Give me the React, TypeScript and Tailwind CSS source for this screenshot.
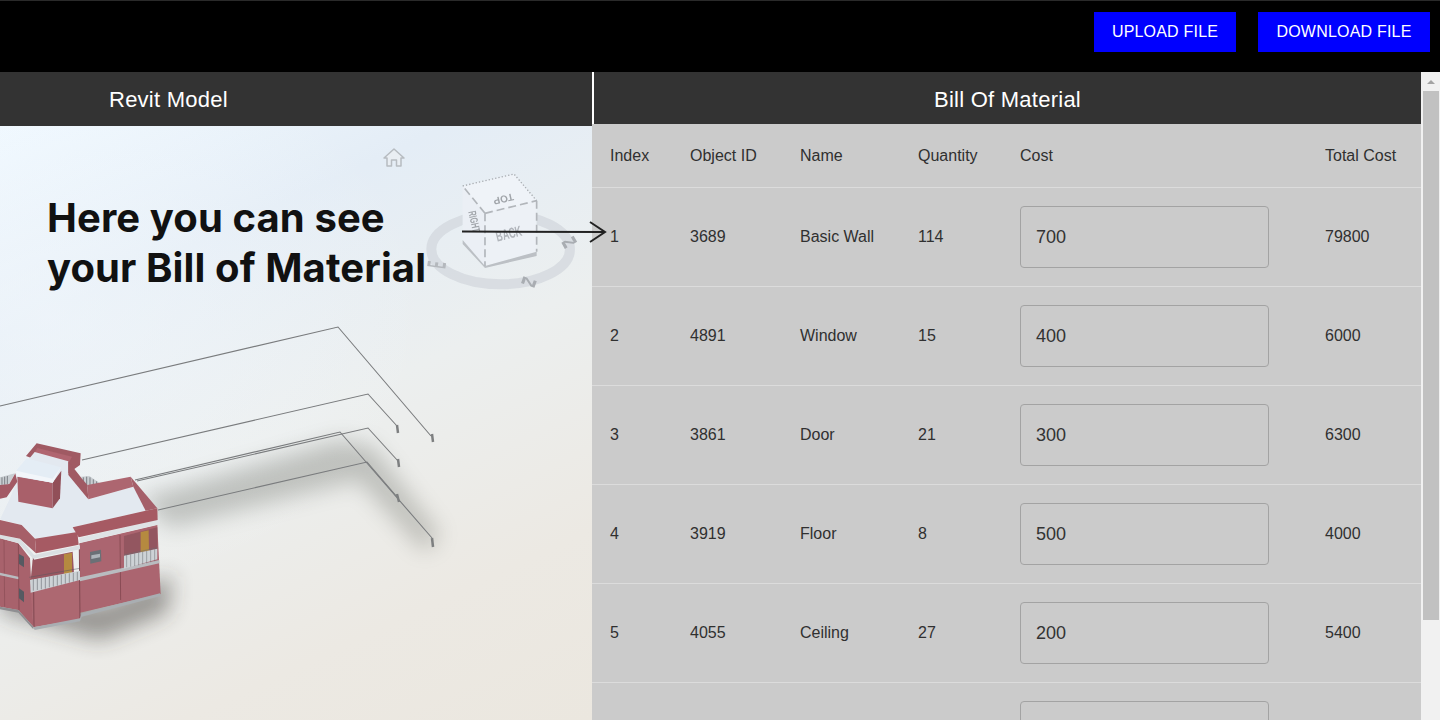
import React from 'react'

const rows = [
  { index: 1, id: 3689, name: 'Basic Wall', qty: 114, cost: 700, total: 79800 },
  { index: 2, id: 4891, name: 'Window', qty: 15, cost: 400, total: 6000 },
  { index: 3, id: 3861, name: 'Door', qty: 21, cost: 300, total: 6300 },
  { index: 4, id: 3919, name: 'Floor', qty: 8, cost: 500, total: 4000 },
  { index: 5, id: 4055, name: 'Ceiling', qty: 27, cost: 200, total: 5400 },
  { index: 6, id: 4120, name: '', qty: '', cost: 100, total: '' },
]

const gridCols = 'grid grid-cols-[80px_110px_118px_102px_305px_1fr] pl-[18px] items-center'

const House = () => (
  <g transform="translate(0 440) scale(0.3333)" filter="url(#soft)">
    {/* walls */}
    <polygon points="238,310 472,255 482,462 240,518" fill="#ab656f" />
    <polygon points="0,295 55,310 90,355 100,560 55,510 0,500" fill="#a8626c" />
    <polygon points="90,440 240,415 240,538 100,562" fill="#ad6771" />
    <line x1="360" y1="285" x2="362" y2="480" stroke="#8a4c55" strokeWidth="3" />
    <line x1="12" y1="300" x2="14" y2="500" stroke="#8a4c55" strokeWidth="2" />
    <line x1="55" y1="312" x2="57" y2="510" stroke="#8a4c55" strokeWidth="3" />
    <line x1="100" y1="350" x2="102" y2="560" stroke="#7f4750" strokeWidth="3" />
    <line x1="238" y1="320" x2="240" y2="535" stroke="#7f4750" strokeWidth="3" />

    {/* mid band */}
    <polygon points="240,412 478,360 478,370 240,424" fill="#b9bcc0" />
    <polygon points="0,398 55,410 55,418 0,406" fill="#b9bcc0" />
    {/* base */}
    <polygon points="100,562 240,535 245,520 480,460 482,468 245,530 240,544 104,570" fill="#a9aeb2" />
    <polygon points="0,500 55,510 100,560 100,568 55,518 0,508" fill="#8f8f92" />

    {/* right balcony */}
    <polygon points="372,288 472,262 472,330 372,347" fill="#935660" />
    <polygon points="422,276 446,271 447,332 422,337" fill="#b58a3f" />
    <polygon points="372,347 472,326 472,358 372,386" fill="#cdd2d6" />
    <path d="M372 345 L472 323 M380 345 V382 M392 343 V380 M404 340 V378 M416 338 V376 M428 335 V373 M440 333 V370 M452 330 V367 M464 328 V364" stroke="#6a6e74" strokeWidth="1.500" fill="none" />

    {/* left balcony */}
    <polygon points="98,360 218,335 222,400 92,420" fill="#9a5761" />
    <polygon points="192,343 216,338 216,402 192,407" fill="#b58a3f" />
    <polygon points="90,420 240,392 240,420 92,458" fill="#cdd2d6" />
    <path d="M88 412 L240 385 M100 418 V452 M112 416 V450 M124 414 V448 M136 412 V446 M148 410 V442 M160 408 V440 M172 406 V437 M184 404 V434 M196 402 V431 M208 400 V428 M220 398 V425 M232 396 V422" stroke="#55585d" strokeWidth="1.500" fill="none" />

    {/* windows */}
    <polygon points="270,336 303,329 304,364 271,371" fill="#6b6f76" />
    <polygon points="274,346 300,341 300,352 274,357" fill="#aeb4ba" />
    <polygon points="57,342 72,350 72,382 57,372" fill="#565a62" />
    <polygon points="57,445 72,455 72,487 57,475" fill="#565a62" />

    {/* slab bands */}
    <polygon points="0,284 62,298 102,345 240,316 240,328 100,356 55,309 0,295" fill="#dadfe2" />
    <polygon points="238,294 478,238 480,252 240,308" fill="#dfe3e6" />

    {/* railings on the roof */}
    <polygon points="0,112 45,100 28,132 0,138" fill="#c9ced2" />
    <polygon points="243,110 268,108 300,130 262,142" fill="#c9ced2" />
    <path d="M6 112 V134 M14 110 V134 M22 108 V132 M250 112 V132 M260 110 V138 M270 112 V138 M280 118 V138 M290 124 V134" stroke="#54585d" strokeWidth="2" fill="none" />

    {/* back parapet */}
    <polygon points="78,48 110,10 242,40 240,75 205,100 110,60" fill="#a05a64" />
    <polygon points="112,24 216,50 205,70 104,38" fill="#b0656f" />

    {/* roof */}
    <polygon points="0,238 30,175 50,125 60,90 104,36 205,64 205,105 265,178 400,140 437,212 218,262 232,276 108,298 65,255" fill="#e3e9f0" />

    {/* parapets around roof */}
    <polygon points="0,135 28,132 46,100 52,125 20,172 0,176" fill="#a35a65" />
    <polygon points="205,64 245,115 262,135 265,178 205,105" fill="#a05a64" />
    <polygon points="262,135 392,110 400,140 265,178" fill="#ad6670" />
    <polygon points="392,110 472,205 437,212 400,140" fill="#a55e69" />
    <polygon points="218,262 437,212 472,205 473,240 236,292" fill="#a65a63" />
    <polygon points="105,296 232,276 236,314 108,340" fill="#a65a63" />
    <polygon points="0,240 65,255 105,296 108,340 60,296 0,284" fill="#a65e68" />

    {/* penthouse */}
    <polygon points="52,110 158,128 158,205 55,185" fill="#a9606a" />
    <polygon points="158,128 184,92 180,175 158,205" fill="#914f58" />
    <polygon points="48,92 80,55 183,82 158,128 50,108" fill="#e4edf5" />
    <polygon points="48,92 158,116 183,82 158,128 50,108" fill="#f2f6fa" />
  </g>
)

const Viewer = () => (
  <svg viewBox="0 126 592 594" className="absolute inset-0 w-full h-full">
    <defs>
      <filter id="shadow" x="-30%" y="-30%" width="160%" height="160%">
        <feGaussianBlur stdDeviation="11" />
      </filter>
      <filter id="soft">
        <feGaussianBlur stdDeviation="1.500" />
      </filter>
      <filter id="faint">
        <feGaussianBlur stdDeviation="2" />
      </filter>
      <filter id="wire">
        <feGaussianBlur stdDeviation="0.300" />
      </filter>
    </defs>

    {/* ground shadows */}
    <polygon points="140,498 340,440 372,446 440,535 425,552 358,480 170,528" fill="#55584f" opacity="0.3" filter="url(#shadow)" />
    <polygon points="0,612 100,640 168,612 172,575 100,605 0,590" fill="#2e2c28" opacity="0.45" filter="url(#shadow)" />

    {/* wires */}
    <g fill="none" stroke="#7a7c7e" strokeWidth="1.100" filter="url(#wire)">
      <path d="M0 406 L338 327 L431 436" />
      <path d="M82 460 L368 394 L397 426" />
      <path d="M135 480 L340 432 L432 538" />
      <path d="M137 481 L368 428 L398 461" />
      <path d="M158 510 L367 462 L398 498" />
    </g>
    <g stroke="#7d7f80" strokeWidth="2.500">
      <line x1="432" y1="434" x2="433" y2="442" />
      <line x1="397" y1="425" x2="398" y2="433" />
      <line x1="398" y1="459" x2="399" y2="467" />
      <line x1="397" y1="494" x2="399" y2="502" />
      <line x1="432" y1="538" x2="433" y2="547" />
    </g>

    <House />

    {/* home icon */}
    <path d="M384 158 L394 149 L404 158 L401 158 L401 166 L396.500 166 L396.500 160 L391.500 160 L391.500 166 L387 166 L387 158 Z" fill="#e9eef3" stroke="#b7bcc1" strokeWidth="1.500" strokeLinejoin="round" />

    {/* compass and view cube */}
    <g transform="translate(360 130) scale(0.3333)" filter="url(#faint)">
      <ellipse cx="422" cy="358" rx="208" ry="105" fill="none" stroke="#cfd4da" strokeWidth="30" opacity="0.65" />
      <text x="0" y="0" transform="translate(256 418) rotate(-82) scale(0.7 1.900)" fontFamily="Liberation Sans, sans-serif" fontWeight="700" fontSize="42" fill="#b4b8bd">E</text>
      <text x="0" y="0" transform="translate(535 455) rotate(200) scale(1.900 0.800)" fontFamily="Liberation Sans, sans-serif" fontWeight="700" fontSize="38" fill="#a9adb2">N</text>
      <text x="0" y="0" transform="translate(645 315) rotate(150) scale(1.900 0.800)" fontFamily="Liberation Sans, sans-serif" fontWeight="700" fontSize="38" fill="#a9adb2">N</text>

      <polygon points="308,168 462,132 530,212 375,250" fill="#eff3f8" />
      <polygon points="308,168 375,250 375,408 308,330" fill="#ebeff5" />
      <polygon points="375,250 530,212 530,365 375,408" fill="#edf1f6" />
      <polygon points="308,330 375,408 530,365 530,378 375,414 308,342" fill="#bcc0c5" />
      <g fill="none" stroke="#b2b6bb" strokeWidth="5" strokeDasharray="24 12">
        <path d="M375 250 L530 212" />
        <path d="M375 250 L308 168" />
        <path d="M375 250 L375 408" />
        <path d="M530 212 L530 365" />
      </g>
      <path d="M308 168 L462 132 L530 212" fill="none" stroke="#a9adb2" strokeWidth="4" strokeDasharray="4 6" />
      <text x="0" y="0" transform="translate(458 190) rotate(167)" fontFamily="Liberation Sans, sans-serif" fontWeight="700" fontSize="30" fill="#a0a4a9">TOP</text>
      <text x="0" y="0" transform="translate(412 335) rotate(-14) scale(0.8 1.300)" fontFamily="Liberation Sans, sans-serif" fontWeight="700" fontSize="34" fill="#b0b4ba">BACK</text>
      <text x="0" y="0" transform="translate(325 245) rotate(78) scale(0.7 1.100)" fontFamily="Liberation Sans, sans-serif" fontWeight="700" fontSize="30" fill="#a0a4a9">RIGHT</text>
    </g>
  </svg>
)

const App = () => {
  return (
    <div className="relative w-full h-screen overflow-hidden flex flex-col bg-black font-['Liberation_Sans',Arial,sans-serif]">
      {/* Top bar */}
      <header className="h-[72px] shrink-0 bg-black border-t border-[#2a2a2a] flex justify-end items-start pt-[11px] pr-[10px] gap-[22px]">
        <button className="w-[142px] h-[40px] bg-[#0000ff] text-white text-base tracking-[0.2px]">UPLOAD FILE</button>
        <button className="w-[172px] h-[40px] bg-[#0000ff] text-white text-base tracking-[0.2px]">DOWNLOAD FILE</button>
      </header>

      <div className="flex flex-1 min-h-0">
        {/* Left Side: model viewer */}
        <section className="w-[592px] shrink-0 flex flex-col">
          <div className="h-[54px] bg-[#333333] text-white text-[22px] tracking-[0.25px] flex items-center pl-[109px]">
            Revit Model
          </div>
          <div className="relative flex-1 bg-[radial-gradient(ellipse_at_8%_32%,rgba(246,250,253,0.5),transparent_50%),linear-gradient(155deg,#eff8ff_0%,#e4edf6_24%,#ecefef_50%,#ece9e3_78%,#ebe7df_100%)]">
            <Viewer />
          </div>
        </section>

        {/* Right Side: bill of material */}
        <section className="flex-1 min-w-0 flex flex-col bg-[#cbcbcb] overflow-hidden">
          <div className="h-[52px] shrink-0 bg-[#333333] border-l-2 border-white text-white text-[22px] tracking-[0.25px] pt-[2px] flex items-center justify-center">
            Bill Of Material
          </div>
          <div className={`${gridCols} h-[64px] shrink-0 border-b border-[#dcdcdc] text-base text-[#303030]`}>
            <div>Index</div>
            <div>Object ID</div>
            <div>Name</div>
            <div>Quantity</div>
            <div>Cost</div>
            <div>Total Cost</div>
          </div>
          {rows.map((r) => (
            <div key={r.index} className={`${gridCols} h-[99px] shrink-0 border-b border-[#dcdcdc] text-base text-[#303030]`}>
              <div>{r.index < 6 ? r.index : ''}</div>
              <div>{r.index < 6 ? r.id : ''}</div>
              <div>{r.name}</div>
              <div>{r.qty}</div>
              <div>
                <div className="w-[249px] h-[62px] rounded border border-[#a3a3a3] pl-[15px] flex items-center text-lg text-[#333333]">
                  {r.index < 6 ? r.cost : ''}
                </div>
              </div>
              <div>{r.total}</div>
            </div>
          ))}
        </section>

        {/* Scrollbar */}
        <div className="w-[19px] shrink-0 bg-[#f1f1f1] flex flex-col items-center">
          <div className="h-[19px] flex items-center justify-center">
            <div className="w-0 h-0 border-l-[4px] border-r-[4px] border-b-[4px] border-l-transparent border-r-transparent border-b-[#a3a3a3]" />
          </div>
          <div className="w-[16px] ml-[1px] h-[529px] bg-[#c1c1c1]" />
        </div>
      </div>

      {/* Tutorial overlay */}
      <h1 className="absolute left-[47px] top-[193px] text-[40px] leading-[50px] font-bold tracking-[0.1px] text-[#111111] font-['Inter',sans-serif] whitespace-nowrap">
        Here you can see
        <br />
        your Bill of Material
      </h1>
      <svg className="absolute left-[460px] top-[220px]" width="150" height="24" viewBox="0 0 150 24" fill="none">
        <path d="M2 11.500 L144 12" stroke="#222222" strokeWidth="2" />
        <path d="M130 2 L145 12 L130 22" stroke="#222222" strokeWidth="2" />
      </svg>
    </div>
  )
}

export default App
